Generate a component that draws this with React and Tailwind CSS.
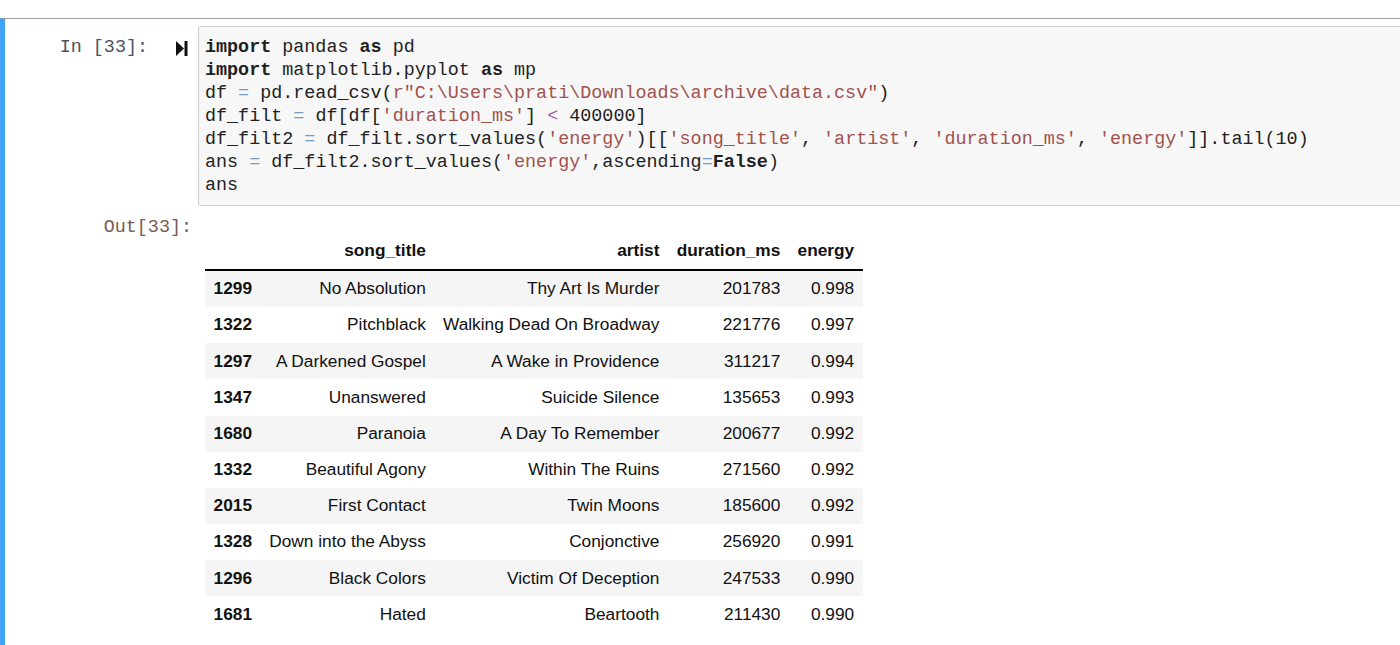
import React from "react";

const rows = [
  ["1299", "No Absolution", "Thy Art Is Murder", "201783", "0.998"],
  ["1322", "Pitchblack", "Walking Dead On Broadway", "221776", "0.997"],
  ["1297", "A Darkened Gospel", "A Wake in Providence", "311217", "0.994"],
  ["1347", "Unanswered", "Suicide Silence", "135653", "0.993"],
  ["1680", "Paranoia", "A Day To Remember", "200677", "0.992"],
  ["1332", "Beautiful Agony", "Within The Ruins", "271560", "0.992"],
  ["2015", "First Contact", "Twin Moons", "185600", "0.992"],
  ["1328", "Down into the Abyss", "Conjonctive", "256920", "0.991"],
  ["1296", "Black Colors", "Victim Of Deception", "247533", "0.990"],
  ["1681", "Hated", "Beartooth", "211430", "0.990"],
];

const K = ({ children }) => <span className="font-bold text-[#1f1f1f]">{children}</span>;
const S = ({ children }) => <span className="text-[#a0524d]">{children}</span>;
const O = ({ children }) => <span className="text-[#6f9bc4]">{children}</span>;
const P = ({ children }) => <span className="text-[#9a62a8]">{children}</span>;

export default function App() {
  const mono = { fontFamily: '"Liberation Mono", "DejaVu Sans Mono", monospace' };
  return (
    <div className="w-[1400px] h-[645px] overflow-hidden bg-white">
      <div className="h-[18px]" />
      <div className="w-[1420px] border-t border-[#a49c9c] border-l-[5px] border-l-[#42a5f5] h-[700px] pt-[7px]">
        {/* input row */}
        <div className="flex">
          <div
            className="w-[193px] shrink-0 flex justify-end items-start text-[18.4px] leading-[23px] text-[#4d5166] pt-[10px] pr-[10px]"
            style={mono}
          >
            <span className="whitespace-pre">In [33]:</span>
            <span className="ml-[28px] mt-[5px] flex">
              <svg width="12" height="15" viewBox="0 0 12 15">
                <polygon points="0,0 8,7.5 0,15" fill="#111" />
                <rect x="8.5" y="0" width="3" height="15" fill="#111" />
              </svg>
            </span>
          </div>
          <div
            className="flex-1 bg-[#f7f7f7] border border-[#cfcfcf] rounded-[2px] pl-[6px] pt-[9px] pb-[8px] text-[18.4px] leading-[23px] text-[#222] whitespace-pre"
            style={mono}
          >
            <div><K>import</K> pandas <K>as</K> pd</div>
            <div><K>import</K> matplotlib.pyplot <K>as</K> mp</div>
            <div>df <O>=</O> pd.read_csv(<S>r"C:\Users\prati\Downloads\archive\data.csv"</S>)</div>
            <div>df_filt <O>=</O> df[df[<S>'duration_ms'</S>] <P>&lt;</P> 400000]</div>
            <div>df_filt2 <O>=</O> df_filt.sort_values(<S>'energy'</S>)[[<S>'song_title'</S>, <S>'artist'</S>, <S>'duration_ms'</S>, <S>'energy'</S>]].tail(10)</div>
            <div>ans <O>=</O> df_filt2.sort_values(<S>'energy'</S>,ascending<O>=</O><K>False</K>)</div>
            <div>ans</div>
          </div>
        </div>
        {/* output row */}
        <div className="flex mt-[10px]">
          <div
            className="w-[193px] shrink-0 text-right text-[18.4px] leading-[23px] text-[#7a5a52] pr-[6px]"
            style={mono}
          >
            Out[33]:
          </div>
          <div className="pl-[7px] pt-[17px]">
            <table
              className="border-collapse text-[17.3px] text-[#111]"
              style={{ fontFamily: '"Liberation Sans", Arial, sans-serif' }}
            >
              <thead>
                <tr className="border-b-2 border-black">
                  <th className="px-[8.6px] py-[8.4px] leading-[19px]"></th>
                  <th className="px-[8.6px] py-[8.4px] leading-[19px] text-right font-bold">song_title</th>
                  <th className="px-[8.6px] py-[8.4px] leading-[19px] text-right font-bold">artist</th>
                  <th className="px-[8.6px] py-[8.4px] leading-[19px] text-right font-bold">duration_ms</th>
                  <th className="px-[8.6px] py-[8.4px] leading-[19px] text-right font-bold">energy</th>
                </tr>
              </thead>
              <tbody>
                {rows.map((r, i) => (
                  <tr key={r[0]} className={i % 2 === 0 ? "bg-[#f5f5f5]" : "bg-white"}>
                    <th className="px-[8.6px] py-[8.4px] leading-[19.4px] text-left font-bold">{r[0]}</th>
                    <td className="px-[8.6px] py-[8.4px] leading-[19.4px] text-right">{r[1]}</td>
                    <td className="px-[8.6px] py-[8.4px] leading-[19.4px] text-right">{r[2]}</td>
                    <td className="px-[8.6px] py-[8.4px] leading-[19.4px] text-right">{r[3]}</td>
                    <td className="px-[8.6px] py-[8.4px] leading-[19.4px] text-right">{r[4]}</td>
                  </tr>
                ))}
              </tbody>
            </table>
          </div>
        </div>
      </div>
    </div>
  );
}
